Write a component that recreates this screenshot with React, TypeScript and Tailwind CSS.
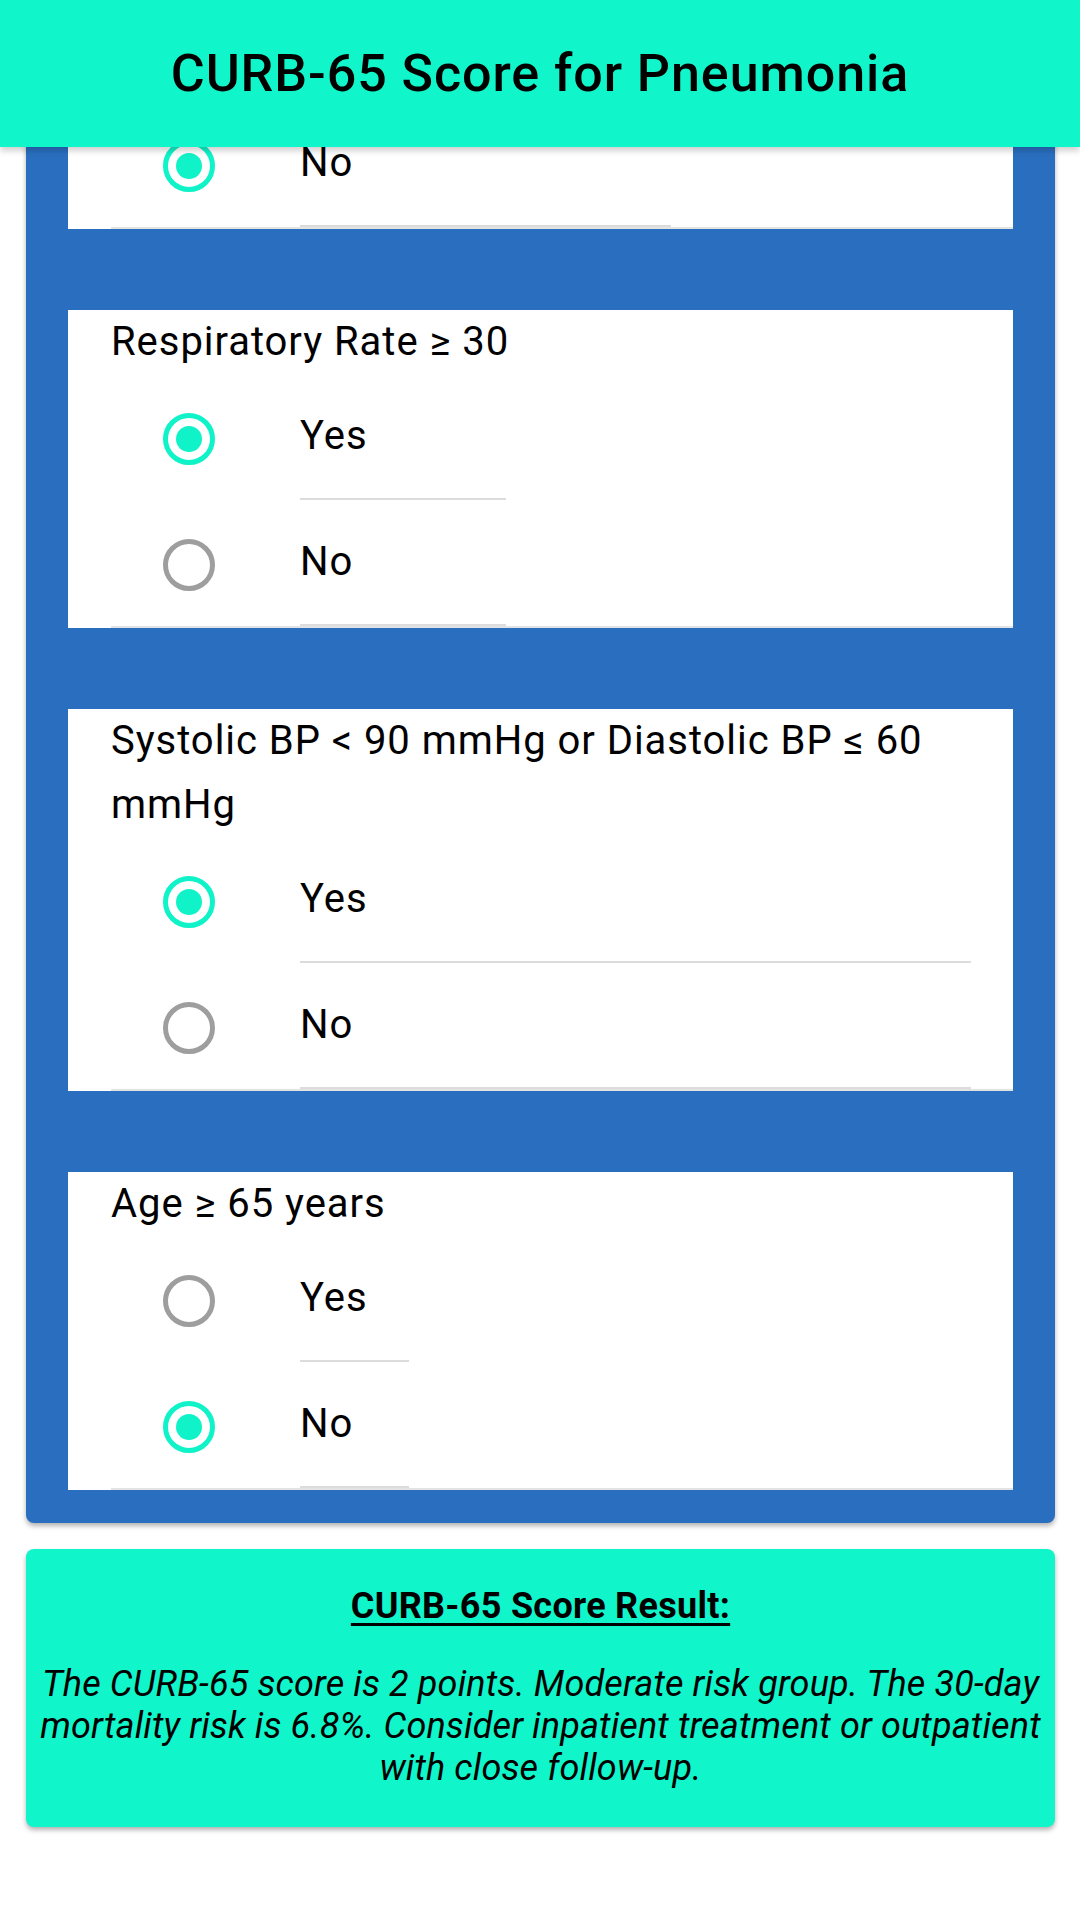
import React from "react";

type Question = {
  label: string;
  answer: "Yes" | "No";
  lineWidth: number;
  partial?: boolean;
};

const questions: Question[] = [
  { label: "Blood Urea Nitrogen > 19 mg/dL", answer: "No", lineWidth: 371, partial: true },
  { label: "Respiratory Rate ≥ 30", answer: "Yes", lineWidth: 206 },
  { label: "Systolic BP < 90 mmHg or Diastolic BP ≤ 60 mmHg", answer: "Yes", lineWidth: 671 },
  { label: "Age ≥ 65 years", answer: "No", lineWidth: 109 },
];

const Radio = ({ checked }: { checked: boolean }) => (
  <div
    className={`w-[52px] h-[52px] rounded-full border-[5px] flex items-center justify-center ${
      checked ? "border-[#10F3C8]" : "border-[#9E9E9E]"
    }`}
  >
    {checked && <div className="w-[26px] h-[26px] rounded-full bg-[#10F3C8]" />}
  </div>
);

const OptionRow = ({ text, checked, lineWidth }: { text: string; checked: boolean; lineWidth: number }) => (
  <div className="flex h-[126px] items-stretch">
    <div className="w-[189px] flex items-center pl-[52px] pt-[4px]">
      <Radio checked={checked} />
    </div>
    <div
      className="flex items-center border-b-2 border-[#DCDCDC] text-[40px] tracking-[0.024em] text-black"
      style={{ width: lineWidth }}
    >
      {text}
    </div>
  </div>
);

const QuestionCard = ({ q }: { q: Question }) => {
  const options = q.partial ? ["No"] : ["Yes", "No"];
  return (
    <div className="bg-white pl-[43px]">
      {!q.partial && (
        <div className="text-[40px] leading-[64px] tracking-[0.024em] text-black pr-[20px]">{q.label}</div>
      )}
      <div className="border-b-2 border-[#E3E3E3]">
        {options.map((o) => (
          <OptionRow key={o} text={o} checked={q.answer === o} lineWidth={q.lineWidth} />
        ))}
      </div>
    </div>
  );
};

const App: React.FC = () => {
  return (
    <div className="min-h-screen bg-white font-['Roboto',sans-serif] overflow-hidden">
      <header className="relative z-10 h-[147px] bg-[#10F5C9] flex items-center justify-center shadow-[0_4px_6px_rgba(0,0,0,0.18)]">
        <h1 className="text-[52px] font-medium tracking-[0.018em] text-black">CURB-65 Score for Pneumonia</h1>
      </header>

      <main className="-mt-[46px] mx-[26px] w-[1029px]">
        <div className="bg-[#2A6FBF] rounded-b-[8px] px-[42px] pb-[33px] flex flex-col gap-[81px] shadow-[0_3px_5px_rgba(0,0,0,0.3)]">
          {questions.map((q) => (
            <QuestionCard key={q.label} q={q} />
          ))}
        </div>

        <div className="mt-[26px] bg-[#10F5C9] rounded-[8px] px-[4px] pt-[37px] pb-[38px] text-center text-black shadow-[0_3px_5px_rgba(0,0,0,0.3)]">
          <h2 className="text-[36px] leading-[40px] font-bold tracking-[0.008em] underline underline-offset-[5px]">
            CURB-65 Score Result:
          </h2>
          <p className="mt-[37px] text-[36px] leading-[42px] tracking-[0.004em] italic">
            The CURB-65 score is 2 points. Moderate risk group. The 30-day mortality risk is 6.8%.
            Consider inpatient treatment or outpatient with close follow-up.
          </p>
        </div>
      </main>
    </div>
  );
};

export default App;
